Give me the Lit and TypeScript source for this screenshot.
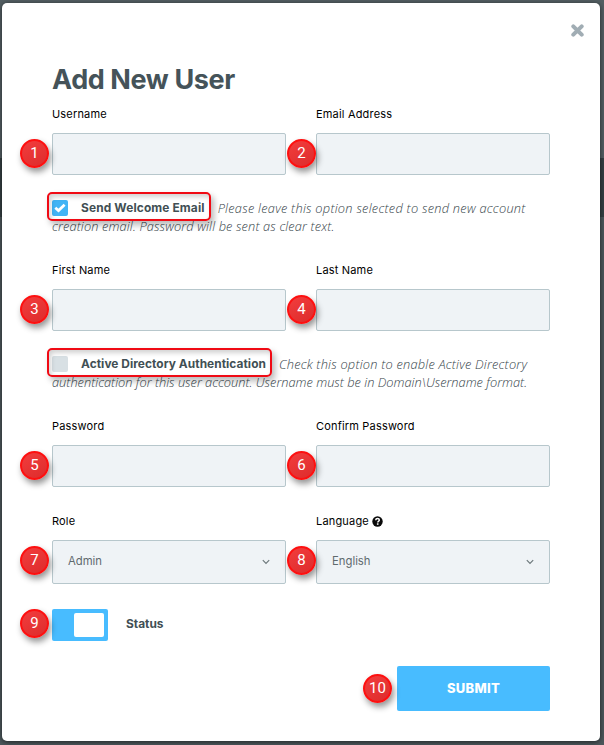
import { LitElement, html, css, nothing } from "lit";
import { customElement, property } from "lit/decorators.js";

@customElement("callout-pin")
class CalloutPin extends LitElement {
  @property() value = "";
  static styles = css`
    :host {
      position: absolute;
      box-sizing: border-box;
      width: 29px;
      height: 29px;
      border-radius: 50%;
      border: 2px solid #fd1010;
      background: linear-gradient(150deg, #f23d3d, #dd2c2c);
      box-shadow: 2px 4px 6px rgba(0, 0, 0, 0.42);
      color: #fff;
      font: 15px/25px Roboto, sans-serif;
      text-align: center;
      z-index: 2;
    }
  `;
  render() {
    return html`${this.value}`;
  }
}

@customElement("form-field")
class FormField extends LitElement {
  @property() label = "";
  @property() pin = "";
  @property() value = "";
  @property({ type: Boolean }) select = false;
  @property({ type: Boolean }) help = false;
  static styles = css`
    :host {
      display: block;
      --pin-left: -33px;
    }
    :host(:nth-child(2)) {
      --pin-left: -30px;
    }
    .label {
      display: flex;
      align-items: center;
      gap: 3px;
      height: 18px;
      margin-bottom: 10px;
      font: 400 11px/18px Inter, sans-serif;
      letter-spacing: 0.18px;
      color: #000;
    }
    .control {
      position: relative;
      box-sizing: border-box;
      display: flex;
      align-items: center;
      justify-content: space-between;
      height: 42px;
      padding: 0 15px;
      border: 1px solid #b7c7cc;
      border-radius: 2px;
      background: #eff3f6;
      font: 11.3px/18px Inter, sans-serif;
      color: #5f6a6e;
    }
    .value {
      margin-bottom: 2px;
    }
    .select {
      height: 44px;
    }
    callout-pin {
      left: var(--pin-left);
      top: 5px;
    }
  `;
  render() {
    return html`
      <div class="label">
        <span>${this.label}</span>
        ${this.help
          ? html`<svg width="11" height="11" viewBox="0 0 11 11">
              <circle cx="5.5" cy="5.5" r="5.2" fill="#0a0a0a" />
              <path d="M3.7 4.3C3.8 3 4.6 2.6 5.5 2.6c1 0 1.8.6 1.8 1.5 0 1.1-1.5 1.2-1.5 2.3" fill="none" stroke="#fff" stroke-width="1.5" />
              <rect x="4.9" y="7.3" width="1.6" height="1.5" fill="#fff" />
            </svg>`
          : nothing}
      </div>
      <div class="control ${this.select ? "select" : ""}">
        <callout-pin value=${this.pin}></callout-pin>
        <span class="value">${this.value}</span>
        ${this.select
          ? html`<svg width="8" height="6" viewBox="0 0 8 6">
              <path d="M.8 1.2 4 4.4 7.2 1.2" fill="none" stroke="#6d787c" stroke-width="1.2" />
            </svg>`
          : nothing}
      </div>
    `;
  }
}

@customElement("option-note")
class OptionNote extends LitElement {
  @property() label = "";
  @property() first = "";
  @property() second = "";
  @property({ type: Boolean }) checked = false;
  static styles = css`
    :host {
      display: block;
      font: italic 300 12.8px/18px "Open Sans", sans-serif;
      color: #36444a;
      white-space: nowrap;
    }
    .line {
      display: flex;
      box-sizing: border-box;
      height: 18px;
    }
    .first {
      letter-spacing: 0.22px;
    }
    .second {
      letter-spacing: 0.01px;
    }
    :host([checked]) .first {
      letter-spacing: 0.26px;
    }
    :host([checked]) .second {
      letter-spacing: 0.14px;
    }
    .choice {
      position: relative;
      display: flex;
      align-items: center;
      margin-right: 13px;
    }
    .outline {
      position: absolute;
      box-sizing: border-box;
      left: -5px;
      right: -6px;
      top: -7px;
      height: 29px;
      border: 2px solid #f00a14;
      border-radius: 5px;
      box-shadow: 3px 4px 6px rgba(0, 0, 0, 0.28), inset 2px 3px 5px rgba(0, 0, 0, 0.18);
    }
    .box {
      display: flex;
      align-items: center;
      justify-content: center;
      width: 16px;
      height: 16px;
      margin-right: 13px;
      border-radius: 2px;
      background: #d8e0e4;
    }
    .checked {
      background: #42b4f5;
    }
    .name {
      font: 700 11.9px/18px Inter, sans-serif;
      letter-spacing: 0.05px;
      color: #414f54;
    }
    :host([checked]) .name {
      letter-spacing: 0.14px;
    }
  `;
  render() {
    return html`
      <div class="line">
        <span class="choice">
          <span class="box ${this.checked ? "checked" : ""}">
            ${this.checked
              ? html`<svg width="12" height="10" viewBox="0 0 12 10">
                  <path d="M1.3 4.7 4.5 7.6 10.6 1.8" fill="none" stroke="#fff" stroke-width="2.7" />
                </svg>`
              : nothing}
          </span>
          <span class="name">${this.label}</span>
          <span class="outline"></span>
        </span>
        <span class="first">${this.first}</span>
      </div>
      <div class="line second">${this.second}</div>
    `;
  }
}

@customElement("app-root")
class AppRoot extends LitElement {
  static styles = css`
    :host {
      display: block;
      box-sizing: border-box;
      width: 604px;
      height: 745px;
      padding: 3px 4px 4px 2px;
      overflow: hidden;
      background: linear-gradient(#535e62 0 158px, #353f43 158px 217px, #4c575b 217px);
    }
    .modal {
      position: relative;
      box-sizing: border-box;
      height: 738px;
      padding: 58px 50px 30px;
      border-radius: 5px;
      background: #fff;
      box-shadow: 0 1px 5px rgba(0, 0, 0, 0.6);
    }
    .close {
      position: absolute;
      right: 16px;
      top: 21px;
    }
    h1 {
      margin: 0;
      height: 44px;
      font: 700 27px/38px Inter, sans-serif;
      letter-spacing: -0.4px;
      color: #455359;
      white-space: nowrap;
    }
    .row {
      display: grid;
      grid-template-columns: 234px 234px;
      gap: 30px;
    }
    option-note {
      margin: 24px 0 26px;
    }
    .roles {
      margin-top: 25px;
    }
    .status {
      position: relative;
      display: flex;
      align-items: center;
      gap: 18px;
      margin-top: 25px;
      font: 700 11.9px/18px Inter, sans-serif;
      color: #414f54;
    }
    .status .text {
      margin-bottom: 2px;
    }
    .toggle {
      box-sizing: border-box;
      display: flex;
      justify-content: flex-end;
      width: 56px;
      height: 32px;
      padding: 4px;
      border-radius: 2px;
      background: #48bcff;
    }
    .knob {
      width: 30px;
      height: 24px;
      border-radius: 2px;
      background: #fff;
    }
    .status callout-pin {
      left: -32px;
      top: 0;
    }
    .submit {
      position: relative;
      box-sizing: border-box;
      display: flex;
      align-items: center;
      justify-content: center;
      width: 153px;
      height: 45px;
      padding-bottom: 1px;
      margin: 25px 0 0 auto;
      border-radius: 2px;
      background: #48bcff;
      font: 800 13px/18px Inter, sans-serif;
      letter-spacing: 0.3px;
      color: #fff;
    }
    .submit callout-pin {
      left: -34px;
      top: 8px;
      letter-spacing: 0;
    }
  `;
  render() {
    return html`
      <div class="modal">
        <svg class="close" width="13" height="13" viewBox="0 0 13 13">
          <path d="M2.3 2.3 10.7 10.7M10.7 2.3 2.3 10.7" stroke="#a1adb4" stroke-width="4" stroke-linecap="round" />
        </svg>
        <h1>Add New User</h1>
        <div class="row">
          <form-field label="Username" pin="1"></form-field>
          <form-field label="Email Address" pin="2"></form-field>
        </div>
        <option-note
          checked
          label="Send Welcome Email"
          first="Please leave this option selected to send new account"
          second="creation email. Password will be sent as clear text."
        ></option-note>
        <div class="row">
          <form-field label="First Name" pin="3"></form-field>
          <form-field label="Last Name" pin="4"></form-field>
        </div>
        <option-note
          label="Active Directory Authentication"
          first="Check this option to enable Active Directory"
          second="authentication for this user account. Username must be in Domain\\Username format."
        ></option-note>
        <div class="row">
          <form-field label="Password" pin="5"></form-field>
          <form-field label="Confirm Password" pin="6"></form-field>
        </div>
        <div class="row roles">
          <form-field select label="Role" pin="7" value="Admin"></form-field>
          <form-field select help label="Language" pin="8" value="English"></form-field>
        </div>
        <div class="status">
          <callout-pin value="9"></callout-pin>
          <span class="toggle"><span class="knob"></span></span>
          <span class="text">Status</span>
        </div>
        <div class="submit">
          <callout-pin value="10"></callout-pin>
          SUBMIT
        </div>
      </div>
    `;
  }
}
